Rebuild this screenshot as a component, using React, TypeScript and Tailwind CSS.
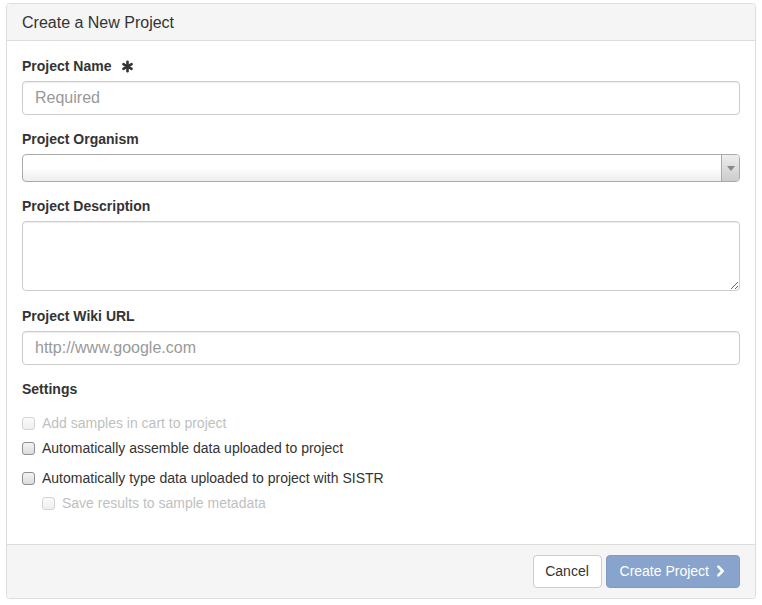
function Box({ disabled }: { disabled?: boolean }) {
  return (
    <span
      className={`inline-block w-[13px] h-[13px] rounded-[3px] border ${
        disabled
          ? 'border-[#d4d4d4] bg-gradient-to-b from-[#fafafa] to-[#efefef]'
          : 'border-[#8f8f8f] bg-gradient-to-b from-[#f4f4f4] to-[#dcdcdc]'
      }`}
    />
  );
}

function Check({ label, disabled, nested }: { label: string; disabled?: boolean; nested?: boolean }) {
  return (
    <div className={`flex items-center h-5 gap-[7px] ${nested ? 'pl-[20px]' : ''}`}>
      <Box disabled={disabled} />
      <span className={disabled ? 'text-[#bfbfbf]' : 'text-[#333]'}>{label}</span>
    </div>
  );
}

function Star() {
  return (
    <svg viewBox="0 0 24 24" className="ml-[10px] w-[13px] h-[13px]" fill="#333">
      <rect x="9.6" y="1" width="4.8" height="22" rx="2.2" />
      <rect x="9.6" y="1" width="4.8" height="22" rx="2.2" transform="rotate(60 12 12)" />
      <rect x="9.6" y="1" width="4.8" height="22" rx="2.2" transform="rotate(-60 12 12)" />
    </svg>
  );
}

export default function App() {
  return (
    <div className="pt-[3px] px-[6px] bg-white font-['Liberation_Sans',Arial,sans-serif] text-[14px] text-[#333] leading-5">
      <div className="w-[750px] border border-[#ddd] rounded-[4px] shadow-[0_1px_1px_rgba(0,0,0,0.05)] overflow-hidden">
        <div className="bg-[#f5f5f5] border-b border-[#ddd] h-[37px] px-[15px] pt-[1px] flex items-center">
          <h3 className="text-[16px] text-[#333]">Create a New Project</h3>
        </div>

        <div className="p-[15px]">
          <div className="mb-[14px]">
            <label className="flex items-center h-5 font-bold mb-[5px]">
              Project Name
              <Star />
            </label>
            <input
              placeholder="Required"
              className="block w-full h-[34px] px-3 text-[16px] border border-[#ccc] rounded-[4px] shadow-[inset_0_1px_1px_rgba(0,0,0,0.075)] placeholder:text-[#999] outline-none"
            />
          </div>

          <div className="mb-[14px]">
            <label className="block h-5 font-bold mb-[5px]">Project Organism</label>
            <div className="flex h-[28px] border border-[#aaa] rounded-[4px] bg-gradient-to-b from-white from-50% to-[#eee] overflow-hidden">
              <div className="flex-1" />
              <div className="w-[18px] border-l border-[#aaa] bg-gradient-to-b from-[#eee] to-[#ccc] flex items-center justify-center">
                <span className="block w-0 h-0 border-l-[4px] border-r-[4px] border-t-[5px] border-l-transparent border-r-transparent border-t-[#888]" />
              </div>
            </div>
          </div>

          <div className="mb-[15px]">
            <label className="block h-5 font-bold mb-[5px]">Project Description</label>
            <textarea className="block w-full h-[70px] px-3 py-[6px] border border-[#ccc] rounded-[4px] shadow-[inset_0_1px_1px_rgba(0,0,0,0.075)] outline-none" />
          </div>

          <div className="mb-[14px]">
            <label className="block h-5 font-bold mb-[5px]">Project Wiki URL</label>
            <input
              placeholder="http://www.google.com"
              className="block w-full h-[34px] px-3 text-[16px] border border-[#ccc] rounded-[4px] shadow-[inset_0_1px_1px_rgba(0,0,0,0.075)] placeholder:text-[#999] outline-none"
            />
          </div>

          <div className="font-bold h-5 mb-[14px]">Settings</div>

          <div className="flex flex-col gap-[5px]">
            <Check label="Add samples in cart to project" disabled />
            <Check label="Automatically assemble data uploaded to project" />
          </div>
          <div className="flex flex-col gap-[5px] mt-[10px] mb-[16px]">
            <Check label="Automatically type data uploaded to project with SISTR" />
            <Check label="Save results to sample metadata" disabled nested />
          </div>
        </div>

        <div className="bg-[#f5f5f5] border-t border-[#ddd] px-[15px] py-[10px] flex justify-end gap-[4px]">
          <button className="h-[33px] w-[69px] pb-[1px] bg-white border border-[#ccc] rounded-[4px] text-[#333]">Cancel</button>
          <button className="h-[33px] pl-[13px] pr-[14px] pb-[1px] bg-[#88a4cc] border border-[#7f9cc5] rounded-[4px] text-white flex items-center gap-[7px]">
            Create Project
            <svg viewBox="0 0 10 14" className="w-[9px] h-[12px]" fill="none" stroke="white" strokeWidth="3" strokeLinecap="round" strokeLinejoin="round">
              <polyline points="2.5,2 7.5,7 2.5,12" />
            </svg>
          </button>
        </div>
      </div>
    </div>
  );
}
